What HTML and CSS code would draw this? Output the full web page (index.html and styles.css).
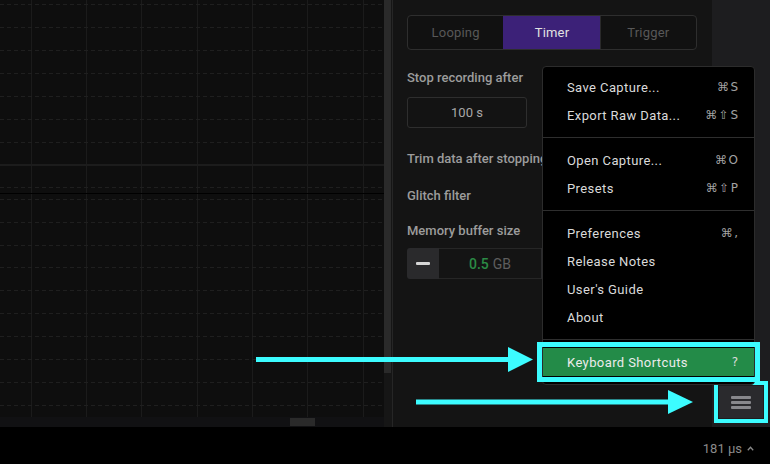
FILE: index.html
```html
<!DOCTYPE html>
<html lang="en">
<head>
<meta charset="utf-8">
<title>Capture settings</title>
<link rel="stylesheet" href="styles.css">
</head>
<body>
<div class="app">
  <div class="workspace">
    <section class="plot-area">
      <div class="plot-col">
        <svg class="grid" width="384" height="417" viewBox="0 0 384 417">
          <g class="vlines">
            <line x1="31.5" y1="0" x2="31.5" y2="417"/>
            <line x1="86.5" y1="0" x2="86.5" y2="417"/>
            <line x1="141.5" y1="0" x2="141.5" y2="417"/>
            <line x1="197.5" y1="0" x2="197.5" y2="417"/>
            <line x1="252.5" y1="0" x2="252.5" y2="417"/>
            <line x1="307.5" y1="0" x2="307.5" y2="417"/>
            <line x1="363.5" y1="0" x2="363.5" y2="417"/>
          </g>
          <g class="hlines">
            <line x1="0" y1="4.5" x2="384" y2="4.5"/>
            <line x1="0" y1="27.5" x2="384" y2="27.5"/>
            <line x1="0" y1="50.5" x2="384" y2="50.5"/>
            <line x1="0" y1="73.5" x2="384" y2="73.5"/>
            <line x1="0" y1="96.5" x2="384" y2="96.5"/>
            <line x1="0" y1="119.5" x2="384" y2="119.5"/>
            <line x1="0" y1="142.5" x2="384" y2="142.5"/>
            <line x1="0" y1="187.5" x2="384" y2="187.5"/>
            <line x1="0" y1="199.5" x2="384" y2="199.5"/>
            <line x1="0" y1="222.5" x2="384" y2="222.5"/>
            <line x1="0" y1="245.5" x2="384" y2="245.5"/>
            <line x1="0" y1="267.5" x2="384" y2="267.5"/>
            <line x1="0" y1="290.5" x2="384" y2="290.5"/>
            <line x1="0" y1="313.5" x2="384" y2="313.5"/>
            <line x1="0" y1="336.5" x2="384" y2="336.5"/>
            <line x1="0" y1="359.5" x2="384" y2="359.5"/>
            <line x1="0" y1="382.5" x2="384" y2="382.5"/>
            <line x1="0" y1="405.5" x2="384" y2="405.5"/>
          </g>
          <line class="sep-light" x1="0" y1="165" x2="384" y2="165"/>
          <line class="sep-dark" x1="0" y1="193.5" x2="384" y2="193.5"/>
        </svg>
        <div class="hscroll"><div class="hthumb"></div></div>
      </div>
      <div class="vscroll"><div class="vthumb"></div></div>
    </section>

    <aside class="panel">
      <div class="segmented">
        <button class="seg">Looping</button>
        <button class="seg active">Timer</button>
        <button class="seg">Trigger</button>
      </div>
      <div class="field-label l-stop">Stop recording after</div>
      <div class="input">100 s</div>
      <div class="field-label l-trim">Trim data after stopping</div>
      <div class="field-label l-glitch">Glitch filter</div>
      <div class="field-label l-mem">Memory buffer size</div>
      <div class="stepper">
        <button class="step minus"><span class="minus-bar"></span></button>
        <div class="step-value"><span class="num">0.5</span><span class="unit">GB</span></div>
        <button class="step plus">+</button>
      </div>
    </aside>

    <div class="strip">
      <button class="menu-btn" aria-label="Menu">
        <svg width="20" height="13" viewBox="0 0 20 13">
          <rect x="0" y="0" width="20" height="3" rx="1"/>
          <rect x="0" y="5" width="20" height="3" rx="1"/>
          <rect x="0" y="10" width="20" height="3" rx="1"/>
        </svg>
      </button>
    </div>
  </div>

  <footer class="status">
    <span class="time">181 μs</span>
    <svg class="caret" width="7" height="5" viewBox="0 0 7 5"><path d="M0.8 4.2 L3.5 1.3 L6.2 4.2"/></svg>
  </footer>

  <nav class="menu">
    <div class="menu-section first">
      <div class="menu-item"><span>Save Capture...</span><span class="kbd">⌘S</span></div>
      <div class="menu-item"><span>Export Raw Data...</span><span class="kbd">⌘⇧S</span></div>
    </div>
    <div class="menu-section">
      <div class="menu-item"><span>Open Capture...</span><span class="kbd">⌘O</span></div>
      <div class="menu-item"><span>Presets</span><span class="kbd">⌘⇧P</span></div>
    </div>
    <div class="menu-section">
      <div class="menu-item"><span>Preferences</span><span class="kbd">⌘,</span></div>
      <div class="menu-item"><span>Release Notes</span></div>
      <div class="menu-item"><span>User's Guide</span></div>
      <div class="menu-item"><span>About</span></div>
    </div>
    <div class="menu-section">
      <div class="menu-item highlighted"><span>Keyboard Shortcuts</span><span class="kbd">?</span></div>
    </div>
  </nav>

  <svg class="arrows" width="770" height="464" viewBox="0 0 770 464">
    <rect x="256" y="357" width="254" height="5"/>
    <polygon points="508,347 533,359.5 508,372"/>
    <rect x="416" y="399.5" width="254" height="5"/>
    <polygon points="668,390 693,402 668,414"/>
  </svg>
</div>
</body>
</html>
```

FILE: styles.css
```css
* { box-sizing: border-box; }

html, body {
  margin: 0;
  padding: 0;
  background: #000;
}

body {
  font-family: Roboto, "Noto Sans", "Liberation Sans", sans-serif;
  color: #ddd;
}

button {
  font-family: inherit;
  border: none;
  margin: 0;
  padding: 0;
  cursor: pointer;
}

.app {
  position: relative;
  width: 770px;
  height: 464px;
  overflow: hidden;
  display: flex;
  flex-direction: column;
  background: #000;
}

.workspace {
  display: flex;
  height: 427px;
}

/* ---------- plot ---------- */
.plot-area {
  display: flex;
  width: 392px;
  background: #0e0e0e;
}

.plot-col {
  display: flex;
  flex-direction: column;
  width: 384px;
}

.grid { display: block; }

.vlines line {
  stroke: #1b1b1b;
  stroke-width: 1;
}

.hlines line {
  stroke: #1f1f1f;
  stroke-width: 1;
  stroke-dasharray: 4 3;
}

.sep-light {
  stroke: #1c1c1c;
  stroke-width: 2;
}

.sep-dark {
  stroke: #000;
  stroke-width: 1.2;
}

.hscroll {
  height: 10px;
  background: #111113;
  display: flex;
  align-items: center;
  padding-left: 290px;
}

.hthumb {
  width: 25px;
  height: 8px;
  background: #2a2a2a;
}

.vscroll {
  width: 8px;
  background: #161616;
  display: flex;
  flex-direction: column;
}

.vthumb {
  width: 7px;
  height: 373px;
  background: #2a2a2a;
}

/* ---------- side panel ---------- */
.panel {
  width: 320px;
  background: #141414;
  border-left: 1px solid #262626;
  padding: 15px 15px 0 14px;
  display: flex;
  flex-direction: column;
  align-items: flex-start;
  overflow: hidden;
}

.segmented {
  display: flex;
  width: 290px;
  height: 35px;
  border: 1px solid #2e2e2e;
  border-radius: 4px;
  background: #111;
  overflow: hidden;
}

.seg {
  flex: 1;
  background: transparent;
  color: #585858;
  font-size: 13px;
  letter-spacing: 0.2px;
}

.seg + .seg { border-left: 1px solid #2a2a2a; }

.seg.active {
  background: #3c2178;
  color: #e2e2e2;
  border-left-color: #3c2178;
}

.seg.active + .seg { border-left-color: #2a2a2a; }

.field-label {
  font-size: 13px;
  line-height: 16px;
  font-weight: 500;
  color: #9c9c9c;
  white-space: nowrap;
}

.l-stop { margin-top: 20px; }
.l-trim { margin-top: 23px; }
.l-glitch { margin-top: 21px; }
.l-mem { margin-top: 19px; }

.input {
  margin-top: 11px;
  width: 120px;
  height: 31px;
  border: 1px solid #2e2e2e;
  border-radius: 3px;
  background: #131313;
  color: #a8a8a8;
  font-size: 13px;
  display: flex;
  align-items: center;
  justify-content: center;
}

.stepper {
  margin-top: 9px;
  display: flex;
  height: 31px;
}

.step {
  width: 32px;
  height: 31px;
  background: #2a2a2c;
  color: #ddd;
  display: flex;
  align-items: center;
  justify-content: center;
  font-size: 16px;
}

.minus { border-radius: 3px 0 0 3px; }
.plus { border-radius: 0 3px 3px 0; }

.minus-bar {
  width: 14px;
  height: 3px;
  background: #d6d6d6;
  border-radius: 1px;
}

.step-value {
  width: 102px;
  background: #141414;
  border-top: 1px solid #262626;
  border-bottom: 1px solid #262626;
  display: flex;
  align-items: center;
  justify-content: center;
  gap: 4px;
  font-size: 14px;
}

.num { color: #2b8a45; font-weight: 500; }
.unit { color: #5e5e5e; }

/* ---------- right strip ---------- */
.strip {
  flex: 1;
  background: #1d1d1f;
  display: flex;
  flex-direction: column;
  justify-content: flex-end;
  align-items: center;
  padding-bottom: 9px;
}

.menu-btn {
  width: 44px;
  height: 32px;
  background: #2a2a2d;
  border-radius: 0;
  display: flex;
  align-items: center;
  justify-content: center;
  outline: 4px solid #3cfcff;
  outline-offset: 1px;
}

.menu-btn svg rect { fill: #88888c; }

/* ---------- status bar ---------- */
.status {
  height: 37px;
  background: #000;
  display: flex;
  justify-content: flex-end;
  align-items: center;
  gap: 5px;
  padding: 5px 16px 0 0;
  color: #8a8a8a;
  font-size: 13px;
}

.caret path {
  fill: none;
  stroke: #8a8a8a;
  stroke-width: 1.3;
}

/* ---------- dropdown menu ---------- */
.menu {
  position: absolute;
  left: 542px;
  top: 66px;
  width: 213px;
  background: #000;
  border: 1px solid #2c2c2c;
  border-radius: 4px;
}

.menu-section {
  padding: 8px 0;
  border-top: 1px solid #2e2e2e;
}

.menu-section.first {
  padding-top: 6px;
  border-top: none;
}

.menu-item {
  height: 28px;
  display: flex;
  align-items: center;
  justify-content: space-between;
  padding: 0 16px 0 24px;
  font-size: 13px;
  letter-spacing: 0.4px;
  color: #dadada;
  white-space: nowrap;
}

.kbd {
  font-family: "DejaVu Sans", sans-serif;
  font-size: 12px;
  color: #a2a2a2;
  letter-spacing: 1.5px;
  margin-right: -1.5px;
}

.menu-item.highlighted {
  background: #238b48;
  color: #ececec;
  outline: 5px solid #3cfcff;
  outline-offset: 1px;
}

.menu-item.highlighted .kbd { color: #dcdcdc; }

/* ---------- annotation arrows ---------- */
.arrows {
  position: absolute;
  left: 0;
  top: 0;
  pointer-events: none;
}

.arrows rect,
.arrows polygon { fill: #3cfcff; }
```
